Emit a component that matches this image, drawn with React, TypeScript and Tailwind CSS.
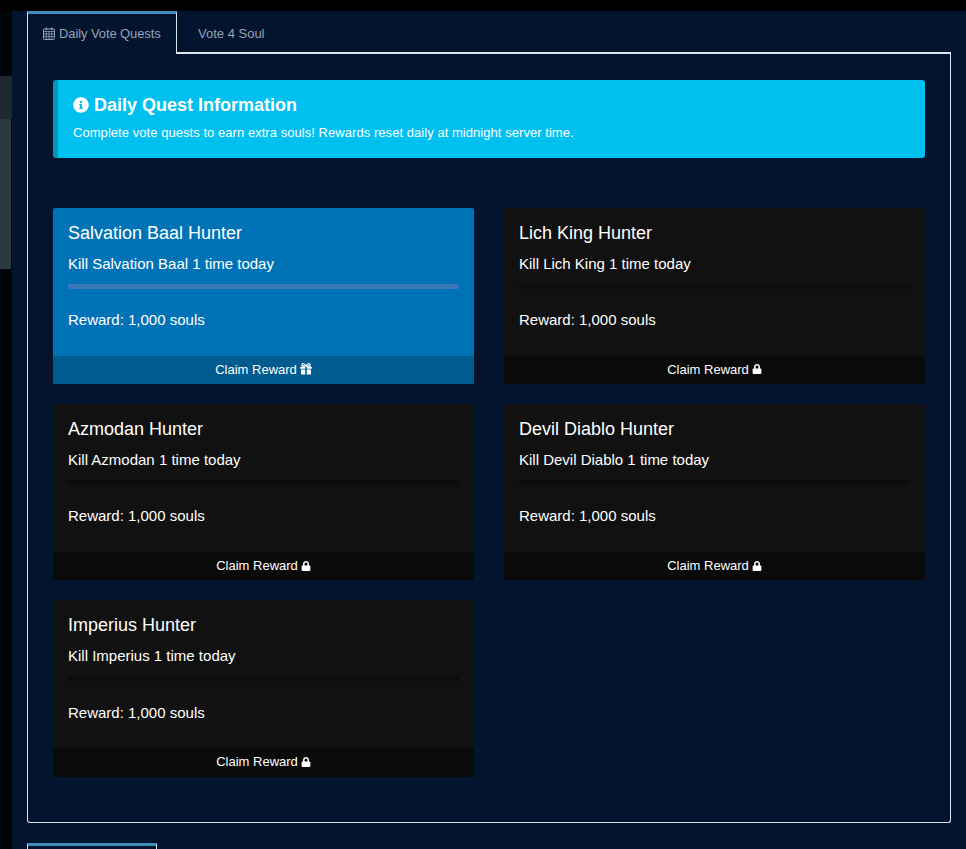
import React from "react";
import { FaInfoCircle, FaLock } from "react-icons/fa";

const CalendarIcon: React.FC = () => (
  <svg width="12" height="13" viewBox="0 0 12 13" fill="none" stroke="currentColor" strokeWidth="1" className="mr-[4px] shrink-0">
    <rect x="0.5" y="2" width="11" height="10.5" rx="1" />
    <path d="M0.5 4.5H11.5M0.5 7H11.5M0.5 9.7H11.5M3.2 4.5V12.5M6 4.5V12.5M8.8 4.5V12.5" strokeWidth="0.8" />
    <path d="M3.2 0.5V3M8.8 0.5V3" strokeWidth="1.4" />
  </svg>
);

// fa4 style gift: two bow loops, lid and a box split by the ribbon
const GiftIcon: React.FC = () => (
  <svg width="12" height="12" viewBox="0 0 12 12" className="shrink-0">
    <path d="M6 3.2C5 .4 2.2 0 1.9 1.6 1.7 2.8 3.6 3.2 6 3.2ZM6 3.2C7 .4 9.8 0 10.1 1.6 10.3 2.8 8.4 3.2 6 3.2Z" fill="none" stroke="currentColor" strokeWidth="1.2" />
    <path d="M0.3 3.4H5.2V5.8H0.3ZM6.8 3.4H11.7V5.8H6.8ZM1 6.5H5.2V11.5H1ZM6.8 6.5H11V11.5H6.8Z" fill="currentColor" />
  </svg>
);

type Quest = { title: string; desc: string; ready?: boolean };

const quests: Quest[] = [
  { title: "Salvation Baal Hunter", desc: "Kill Salvation Baal 1 time today", ready: true },
  { title: "Lich King Hunter", desc: "Kill Lich King 1 time today" },
  { title: "Azmodan Hunter", desc: "Kill Azmodan 1 time today" },
  { title: "Devil Diablo Hunter", desc: "Kill Devil Diablo 1 time today" },
  { title: "Imperius Hunter", desc: "Kill Imperius 1 time today" },
];

const QuestCard: React.FC<{ quest: Quest }> = ({ quest }) => {
  if (quest.ready) {
    return (
      <div className="h-[176.4px] flex flex-col rounded-[2px] overflow-hidden bg-[#0073b7] text-white">
        <div className="flex-1 px-[15px] pt-[14px]">
          <h3 className="text-[18px] leading-[22px]">{quest.title}</h3>
          <p className="text-[15px] leading-5 mt-[10px]">{quest.desc}</p>
          <div className="h-[5px] rounded-[2px] bg-[#3a78b6] mt-[10px]"></div>
          <p className="text-[15px] leading-5 mt-[21.2px]">Reward: 1,000 souls</p>
        </div>
        <div className="h-[28.4px] pb-[1px] flex items-center justify-center gap-[3px] bg-[#005b8f] text-[13px]">
          Claim Reward <GiftIcon />
        </div>
      </div>
    );
  }
  return (
    <div className="h-[176.4px] flex flex-col rounded-[2px] overflow-hidden bg-[#111111] text-white">
      <div className="flex-1 px-[15px] pt-[14px]">
        <h3 className="text-[18px] leading-[22px]">{quest.title}</h3>
        <p className="text-[15px] leading-5 mt-[10px]">{quest.desc}</p>
        <div className="h-[5px] rounded-[2px] bg-[#0c0c0c] mt-[10px]"></div>
        <p className="text-[15px] leading-5 mt-[21.2px]">Reward: 1,000 souls</p>
      </div>
      <div className="h-[28.4px] pb-[1px] flex items-center justify-center gap-[3px] bg-[#0a0a0a] text-[13px]">
        Claim Reward <FaLock className="w-[10px] h-[10px]" />
      </div>
    </div>
  );
};

export default function App() {
  return (
    <div className="h-[849px] overflow-hidden flex flex-col bg-black font-['Liberation_Sans',Arial,sans-serif]">
      <div className="h-[11px] shrink-0 bg-black"></div>
      <div className="flex-1 flex">
        {/* page peeking out behind the modal */}
        <div className="w-3 shrink-0 flex flex-col pt-[65px] bg-[#010409]">
          <div className="h-[43px] bg-[#1f2a2e]"></div>
          <div className="h-[150px] w-[11px] bg-[#2a3a3e]"></div>
        </div>

        <div className="flex-1 bg-[#02142e] pl-[15px] pr-[15px]">
          <div className="flex h-[43px]">
            <div className="w-[150px] border-t-[3px] border-x border-t-[#3c8dbc] border-x-[#dde6ee] flex items-center pl-[15px] pb-[1px] text-[13px] tracking-[-0.1px] text-[#94a3b8]">
              <CalendarIcon />
              Daily Vote Quests
            </div>
            <div className="flex-1 border-b-2 border-[#dde6ee] pl-[21px] pt-[5px] flex items-center text-[13px] text-[#94a3b8]">
              Vote 4 Soul
            </div>
          </div>

          <div className="h-[769px] border border-t-0 border-[#dde6ee] rounded-b-[3px] px-[25px] pt-[26px]">
            <div className="h-[78px] rounded-[3px] bg-[#00c0ef] border-l-[5px] border-[#0097bc] pl-[15px] pt-[14px] text-white">
              <h4 className="flex items-center gap-[5px] text-[18px] leading-[22px] font-bold">
                <FaInfoCircle className="w-[16px] h-[16px]" />
                Daily Quest Information
              </h4>
              <p className="text-[13px] leading-[17px] mt-[8px] tracking-[0.05px]">
                Complete vote quests to earn extra souls! Rewards reset daily at midnight server time.
              </p>
            </div>

            <div className="grid grid-cols-2 gap-x-[30px] gap-y-5 mt-[49.6px]">
              {quests.map((q) => (
                <QuestCard key={q.title} quest={q} />
              ))}
            </div>
          </div>

          <div className="w-[130px] h-[6px] mt-5 border-t-[3px] border-x border-t-[#3c8dbc] border-x-[#dde6ee]"></div>
        </div>
      </div>
    </div>
  );
}
